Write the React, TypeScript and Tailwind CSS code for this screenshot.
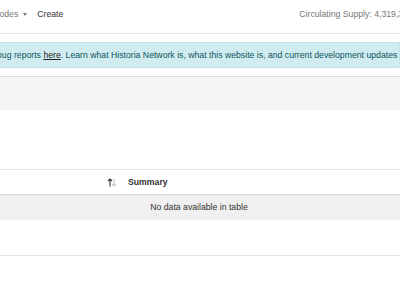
import React from "react";

const SortIcon: React.FC = () => (
  <svg width="10" height="9" viewBox="0 0 10 9" className="shrink-0">
    <path d="M3 8.5V1M1 3l2-2 2 2" stroke="#333" strokeWidth="1.1" fill="none" />
    <path d="M7 0.5V8M5 6l2 2 2-2" stroke="#c8c8c8" strokeWidth="1.1" fill="none" />
  </svg>
);

const App: React.FC = () => {
  return (
    <div className="w-[400px] h-[284px] overflow-hidden bg-white whitespace-nowrap font-['Liberation_Sans',Arial,sans-serif] text-[8.7px] leading-none">
      {/* top nav */}
      <div className="h-[34px] border-b border-[#e7e7e7] flex items-center pb-[4px]">
        <div className="flex items-center -ml-[32px] shrink-0">
          <span className="text-[#777]">Masternodes</span>
          <span className="ml-[5px] w-0 h-0 border-x-[2.7px] border-x-transparent border-t-[3px] border-t-[#777]" />
          <span className="ml-[10px] text-[#333]">Create</span>
        </div>
        <span className="ml-[236px] shrink-0 text-[#777]">Circulating Supply: 4,319,372.51 HTA</span>
      </div>

      {/* info banner */}
      <div className="mt-[8px] h-[26px] -ml-[4px] border border-[#bee5eb] bg-[#d1ecf1] text-[#0c5460] flex items-center">
        <span className="shrink-0">
          bug reports <span className="text-[#222] underline">here</span>. Learn what Historia Network is, what this
          website is, and current development updates here.
        </span>
      </div>

      {/* filter bar */}
      <div className="mt-[8px] h-[34px] bg-[#f5f5f5] border-t border-[#dddddd]" />

      {/* table */}
      <div className="mt-[59px] border-t border-[#e5e5e5]">
        <div className="h-[25px] border-b border-[#d5d5d5] flex items-center">
          <div className="w-[121px] shrink-0 flex justify-end pr-[4px]">
            <SortIcon />
          </div>
          <span className="ml-[7px] font-bold text-[#333]">Summary</span>
        </div>
        <div className="h-[25px] bg-[#f0f0f0] flex items-center justify-center text-[#333] pr-[2px]">
          No data available in table
        </div>
        <div className="h-[36px] border-b border-[#e5e5e5]" />
      </div>
    </div>
  );
};

export default App;
